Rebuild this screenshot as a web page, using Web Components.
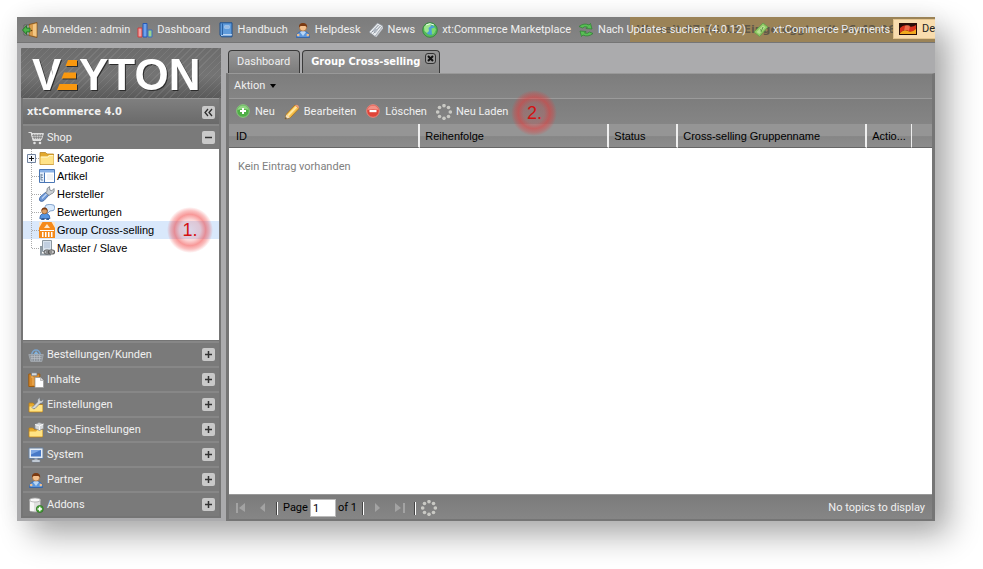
<!DOCTYPE html>
<html lang="de">
<head>
<meta charset="utf-8">
<title>xt:Commerce 4.0 - Group Cross-selling</title>
<style>
  html { background: #fff; }
  body {
    margin: 0; padding: 17px 48px 48px 17px; box-sizing: border-box; min-height: 100vh;
    --ui: Roboto, "Noto Sans", sans-serif; --bold: "DejaVu Sans Condensed", "DejaVu Sans", sans-serif;
    display: flex; font: 11px/16px var(--ui); color: #f0f0f0;
    --arial: "Liberation Sans", Arial, sans-serif; --edge: #757575; --gap: #ababad; overflow: hidden;
  }
</style>
</head>
<body>
<admin-shell>
  <top-bar slot="top">
    <top-link icon="exit">Abmelden : admin</top-link>
    <top-link icon="chart">Dashboard</top-link>
    <top-link icon="book">Handbuch</top-link>
    <top-link icon="user">Helpdesk</top-link>
    <top-link icon="news">News</top-link>
    <top-link icon="globe">xt:Commerce Marketplace</top-link>
    <top-link icon="sync">Nach Updates suchen (4.0.12)</top-link>
    <top-link icon="money">xt:Commerce Payments</top-link>
    <session-clock slot="clock">Uhrzeit 07:36:13 Eingeloggt seit 06:42:26</session-clock>
    <lang-button slot="lang">De</lang-button>
  </top-bar>
  <side-panel slot="side" heading="xt:Commerce 4.0">
    <side-section icon="cart" open label="Shop">
      <tree-item icon="folder" branch>Kategorie</tree-item>
      <tree-item icon="sheet">Artikel</tree-item>
      <tree-item icon="wrench">Hersteller</tree-item>
      <tree-item icon="review">Bewertungen</tree-item>
      <tree-item icon="cross" selected badge="1.">Group Cross-selling</tree-item>
      <tree-item icon="master" last>Master / Slave</tree-item>
    </side-section>
    <side-section icon="basket" label="Bestellungen/Kunden"></side-section>
    <side-section icon="paste" label="Inhalte"></side-section>
    <side-section icon="foldertool" label="Einstellungen"></side-section>
    <side-section icon="folderbox" label="Shop-Einstellungen"></side-section>
    <side-section icon="monitor" label="System"></side-section>
    <side-section icon="user" label="Partner"></side-section>
    <side-section icon="dbadd" label="Addons"></side-section>
  </side-panel>
  <tab-strip slot="main">
    <tab-item>Dashboard</tab-item>
    <tab-item active>Group Cross-selling</tab-item>
  </tab-strip>
  <grid-panel slot="main">
    <tool-button slot="tools" icon="add">Neu</tool-button>
    <tool-button slot="tools" icon="pencil">Bearbeiten</tool-button>
    <tool-button slot="tools" icon="remove">Löschen</tool-button>
    <tool-button slot="tools" icon="dots">Neu Laden</tool-button>
    <step-badge slot="tools">2.</step-badge>
    <data-grid></data-grid>
    <pager-bar slot="pager"></pager-bar>
  </grid-panel>
</admin-shell>
<script>
const userShape = `<path d="M1.500 15.500q0-5 4-6h5q4 1 4 6z" fill="#5d97dc" stroke="#2c5ea8" stroke-width=".8"/><path d="M5 10l3 4 3-4-3-1.500z" fill="#b9d6f6"/><circle cx="8" cy="5.500" r="3.600" fill="#f4c08c" stroke="#9b5a22" stroke-width=".6"/><path d="M4 5.500Q3.500 1 8 1t4.200 4.500L10.500 4h-5z" fill="#7a3a12"/><circle cx="3.200" cy="13" r="1.300" fill="#f4c08c"/><circle cx="12.800" cy="13" r="1.300" fill="#f4c08c"/>`;
const folderShape = `<path d="M1 2.500h5.500L8 4h6.500v10.500H1z" fill="#e3a92e" stroke="#b98524" stroke-width=".8"/><path d="M1.400 6.500h7L9.900 5h4.700v9.200H1.400z" fill="#ffe388"/><path d="M2 7.100h6.800l1.500-1.500H14" stroke="#fff7cf" fill="none"/>`;
const dotsShape = [[8,1.700],[12.500,3.500],[14.300,8],[12.500,12.500],[8,14.300],[3.500,12.500],[1.700,8],[3.500,3.500]].map(([x,y]) => `<circle cx="${x}" cy="${y}" r="1.800" fill="#c9c9c4"/>`).join("");
const ICONS = {
  exit: `<path d="M7 2.500l8-2v15l-8-2z" fill="#d89b4c" stroke="#7d4e17" stroke-width=".8"/><path d="M11 2.500l3.500-1v13l-3.500-1z" fill="#f2c581"/><path d="M7 3H2v10h5" fill="#9ba197" stroke="#555" stroke-width=".8"/><path d="M.5 8l4-4.500v2.600H8v3.800H4.500v2.600z" fill="#4db34b" stroke="#1c6d20" stroke-width=".8"/><circle cx="9.500" cy="8.500" r=".8" fill="#5b370d"/>`,
  chart: `<path d="M1 6h4v9H1z" fill="#f3a0a0" stroke="#d23a3a"/><path d="M6 1.500h4V15H6z" fill="#6ea1ec" stroke="#2659b5"/><path d="M11 8h4v7h-4z" fill="#9ad48d" stroke="#3a6ec2"/>`,
  book: `<path d="M2 .8h12v14H3.500L2 13z" fill="#5f9bdb" stroke="#1d4f8d"/><path d="M3.500 14l1-1.200H14" stroke="#e5eefb" fill="none"/><path d="M4.500 1.500V13" stroke="#2a61a3"/><path d="M6.500 3.500h5v3h-5z" fill="#cfe3fb"/><path d="M7 5h4" stroke="#3a6fae" stroke-width=".7"/>`,
  user: userShape,
  news: `<path d="M1 10L9.500 1l5.500 3-8 10.500z" fill="#e9ecef" stroke="#8b9299" stroke-width=".8"/><path d="M3.500 10.500l7-7.500M5.500 11.500l7-7.500" stroke="#858d97"/><path d="M7 6l3 1.800L7.500 11 4.800 9z" fill="#aeb6c0"/><path d="M7 14.500L15 4v2.500L8.500 15z" fill="#c6cbd2"/>`,
  globe: `<circle cx="8" cy="8" r="7.300" fill="#58b95a" stroke="#2b8434" stroke-width=".8"/><circle cx="8.500" cy="8" r="4.800" fill="#4c9fd8"/><path d="M2 5Q4 1.500 8 1.500L9 4 6.500 6 7 9l-2 2-2.500-2z" fill="#9be68b"/><path d="M9.500 6.500l3-1 1.500 2-2 4-2 1z" fill="#7ddc6d"/><path d="M4 3q4-2.500 8 0" stroke="#effff0" fill="none"/>`,
  sync: `<path d="M1 4.500Q6 .5 11 3l1.500-1.500L14 7l-6-.5 1.500-1.500Q6 4 4.500 6z" fill="#58bf55" stroke="#2c7e31" stroke-width=".7"/><path d="M15 11.500q-5 4-10 1.500l-1.500 1.500L2 9l6 .5L6.500 11q3.500 1 5-1z" fill="#58bf55" stroke="#2c7e31" stroke-width=".7"/>`,
  money: `<path d="M1 10L10 1l5 4-8.500 9.500z" fill="#8fca62" stroke="#62984a" stroke-width=".8"/><path d="M3.500 10L10 3.300 12.500 5.300 6.300 12z" fill="#b6df92"/><path d="M7 7.500l2 1.500M8 10l2-5" stroke="#5c9a44"/>`,
  cart: `<path d="M.5 2.500h2.700l2 8H13" fill="none" stroke="#dedede" stroke-width="1.200"/><path d="M3.500 3.500h12l-2 6H5z" fill="#d0d0d0" stroke="#e8e8e8" stroke-width=".8"/><path d="M5.500 4l1 5M8 4l.5 5M11 4l-.5 5M13.500 4l-1 5M4 5.600h10.500M4.500 7.600H14" stroke="#727272" stroke-width=".6"/><circle cx="6.500" cy="13" r="1.300" fill="#e0e0e0"/><circle cx="12" cy="13" r="1.300" fill="#e0e0e0"/>`,
  folder: folderShape,
  sheet: `<path d="M.5 1.500h15v13H.5z" fill="#fff" stroke="#4a77b5"/><path d="M1 2h14v2.500H1z" fill="#89b1e6"/><path d="M5.500 4.500v10" stroke="#4a77b5"/><path d="M1 5h4v9H1z" fill="#e3eefb"/><path d="M2 6v6M2 7h2M2 9.500h2M2 12h2" stroke="#5d7590" stroke-width=".8"/><path d="M8 7h6M8 9h6M8 11h6" stroke="#e3e8ef"/>`,
  wrench: `<path d="M1 15q-1.500-2 .5-4.500L7 6l3 3-5 5.500Q3 16 1 15z" fill="#6e98d6" stroke="#3a62a0" stroke-width=".8"/><path d="M3 12.500L7.500 8" stroke="#bdd5f5" stroke-width="1.300"/><path d="M6.500 6.500L8 5.500Q7 2 10.500.5L10.800 4l2 .8L15 2.500q1 4.500-3 5.500l-2 1.500z" fill="#cbd0d5" stroke="#737b84" stroke-width=".8"/>`,
  review: `<path d="M7 1q4-1.500 8 .2 2 3.500-.5 5.300L11 7 8.500 9.500V6.500Q4.500 4.500 7 1z" fill="#d9eafd" stroke="#6b8fbf" stroke-width=".8"/><path d="M.8 14.500q0-4 3-5h4q3.200 1 3.200 5z" fill="#5796e2" stroke="#2b5ca5" stroke-width=".8"/><circle cx="5.500" cy="7" r="2.900" fill="#dba067" stroke="#864a19" stroke-width=".6"/><path d="M2.500 7Q2.500 3.500 5.500 3.500T8.500 7L7 5.600H4z" fill="#7f3c12"/><path d="M3.500 14h2v2h-4zM8 14h2v2H7z" fill="#365d94"/>`,
  cross: `<path d="M0 0h16v16H0z" fill="#f58a1a"/><path d="M0 0h3.500L0 6zM16 0h-3.500L16 6zM5 6l3-4 3 4z" fill="#fde6c8"/><path d="M1 8h14v1H1zM3 10h1.500v5H3zM6 10h1.500v5H6zM9 10h1.500v5H9zM12 10h1.500v5H12z" fill="#fff"/>`,
  master: `<path d="M3.500.5h9v11h-9z" fill="#d9e3ed" stroke="#8b969f"/><path d="M5 3h6M5 5h6M5 7h6" stroke="#a9bad2"/><path d="M2 6v8.500H12" fill="none" stroke="#8f9aa3" stroke-width="2"/><rect x="5" y="10" width="6" height="4" rx="2" fill="#b9bcc0" stroke="#5d5d5d"/><rect x="9.500" y="10" width="6" height="4" rx="2" fill="#ccc" stroke="#5d5d5d" stroke-width="1.200"/><path d="M7 12h6" stroke="#555"/>`,
  basket: `<path d="M3.500 8q1-5 4.500-5t4.500 5" fill="none" stroke="#79a4cf" stroke-width="1.500"/><path d="M5 8L8 4l3.500 4" fill="#84b5df"/><path d="M.8 7.500h14.500l-1.500 7h-11z" fill="#8d949c" stroke="#a6acb3" stroke-width=".8"/><path d="M2.500 9.500h11M3 11.500h10.500M4 8v6M6.500 8v6M9 8v6M11.500 8v6" stroke="#c0c5cb" stroke-width=".6"/>`,
  paste: `<path d="M.8 2h11v12.500h-11z" fill="#d98b2b" stroke="#9b5b12"/><path d="M3.500.8H9v3H3.500z" fill="#d8dce0" stroke="#737a82" stroke-width=".8"/><path d="M3 5h2v8" fill="none" stroke="#efb564"/><path d="M7 5.500h5.500l3 3v7H7z" fill="#fff" stroke="#9b9b9b" stroke-width=".8"/><path d="M12.500 5.500v3h3" fill="#dcdcdc" stroke="#999" stroke-width=".6"/>`,
  foldertool: `<path d="M1 6h4l1.500 1.500h8V15H1z" fill="#e5a92c" stroke="#b67d1c" stroke-width=".8"/><path d="M1.500 9.500H8l1.500-1.500h5v6.500h-13z" fill="#ffe384"/><path d="M4 10.500L9.500 5q-.5-3.500 2.500-4.500v3l1.500.5L15.500 2q.5 4-3.500 4.500L7 11.500q-2 1-3-1z" fill="#d4d8dc" stroke="#70767d" stroke-width=".7"/>`,
  folderbox: `<path d="M1 6h4l1.500 1.500h8V15H1z" fill="#e5a92c" stroke="#b67d1c" stroke-width=".8"/><path d="M1.500 9.500H8l1.500-1.500h5v6.500h-13z" fill="#ffe384"/><path d="M7 2.500L11 .5l4.500 1.500v4.500l-4 2L7 6.500z" fill="#d5d8db" stroke="#898e94" stroke-width=".7"/><path d="M7 2.500l4.500 1.500 4-2M11.500 4v4" fill="none" stroke="#f7f7f7"/>`,
  monitor: `<path d="M1 1h14v10.500H1z" fill="#e5edf6" stroke="#68809e"/><path d="M3 3h10v6.500H3z" fill="#4779c7"/><path d="M3 3h10L3 7.500z" fill="#7ca6e3"/><path d="M6.500 11.500h3V13h-3z" fill="#b4bfcc"/><path d="M4 13h8v2H4z" fill="#dfe5ec" stroke="#78889c" stroke-width=".6"/>`,
  dbadd: `<path d="M1.500 3v10q0 2 5.500 2t5.500-2V3z" fill="#dfdfdf" stroke="#9d9d9d" stroke-width=".8"/><path d="M3 4v10M5 5v9" stroke="#fff" stroke-width="1.500"/><ellipse cx="7" cy="3" rx="5.500" ry="2" fill="#f8f8f8" stroke="#a8a8a8" stroke-width=".8"/><circle cx="11.800" cy="12" r="3.500" fill="#4fa83e" stroke="#2b711f" stroke-width=".8"/><path d="M11.800 9.800v4.400M9.600 12H14" stroke="#fff" stroke-width="1.500"/>`,
  add: `<circle cx="8" cy="7" r="6.300" fill="#4fae46" stroke="#8ccb80" stroke-width="1"/><path d="M2.500 6Q3.500 1.500 8 1.500T13.500 6Q8 4 2.500 6z" fill="#93d486"/><path d="M8 4v6M5 7h6" stroke="#fff" stroke-width="2"/>`,
  remove: `<circle cx="8" cy="7" r="6.300" fill="#e04438" stroke="#e98a80" stroke-width="1"/><path d="M2.500 6Q3.500 1.500 8 1.500T13.500 6Q8 4 2.500 6z" fill="#f29287"/><path d="M4.500 7h7" stroke="#fff" stroke-width="2.400"/>`,
  pencil: `<path d="M1 15l1.500-5L11 1l4 3.500L6.500 13.500z" fill="#f7bf48" stroke="#a8701d" stroke-width=".8"/><path d="M4 11.500L12.500 2.800" stroke="#ffe7a0" stroke-width="2"/><path d="M11 1.500q1.500-1.500 3.200 0t.3 3z" fill="#ec9a72"/><path d="M1 15l1.500-4.500L6 13.500z" fill="#f6dfb8"/><path d="M1 15l.6-2 1.500 1.300z" fill="#333"/>`,
  dots: dotsShape
};
const define = (name, css, html) => customElements.define(name, class extends HTMLElement {
  constructor() {
    super();
    this.attachShadow({ mode: "open" });
  }
  connectedCallback() {
    if (this.shadowRoot.childNodes.length) return;
    const t = document.createElement("template");
    t.innerHTML = `<style>*{box-sizing:border-box}button,input{font:inherit;color:inherit;margin:0;padding:0;border:0;background:none}a{color:inherit;text-decoration:none}:host{display:block;box-sizing:border-box}${css}</style>` +
      (typeof html === "function" ? html(this) : html);
    this.shadowRoot.append(t.content.cloneNode(true));
  }
});
const attr = (el, n) => el.getAttribute(n) || "";

define("ui-icon", `:host{width:16px;height:16px;flex:none}svg{display:block}`,
  el => `<svg width="16" height="16" viewBox="0 0 16 16" aria-hidden="true">${ICONS[attr(el, "name")]}</svg>`);

define("admin-shell", `
  :host{flex:1;min-width:0;display:grid;grid-template:26px 1fr / 200px minmax(0,1fr);column-gap:5px;
    background:var(--gap);box-shadow:14px 14px 30px rgba(0,0,0,.33),0 0 24px rgba(0,0,0,.06);min-height:500px}
  .top{grid-column:1/3;min-width:0}
  .side{padding:5px 0 3px 4px;display:flex;width:204px}
  .main{padding-top:7px;display:flex;flex-direction:column;min-width:0;margin-left:4px}`,
  `<header class="top"><slot name="top"></slot></header><aside class="side"><slot name="side"></slot></aside><main class="main"><slot name="main"></slot></main>`);

define("top-bar", `
  :host{height:26px;position:relative;overflow:hidden;background:linear-gradient(#7c7c7c,#858585);border-bottom:1px solid var(--edge)}
  nav{position:relative;display:flex;align-items:center;gap:7px;height:25px;padding-left:5px}
  .clock{position:absolute;top:0;right:0;bottom:0}
  .lang{position:absolute;top:2px;right:0}`,
  `<div class="clock"><slot name="clock"></slot></div><nav><slot></slot></nav><div class="lang"><slot name="lang"></slot></div>`);

define("top-link", `:host{flex:none}a{display:flex;align-items:center;gap:4px;white-space:nowrap}`,
  el => `<a href="#"><ui-icon name="${attr(el, "icon")}"></ui-icon><slot></slot></a>`);

define("session-clock", `:host{width:305px;height:25px;background:#9b8357;color:#5f5849;font:bold 11px/25px "DejaVu Sans",sans-serif;padding-left:6px;white-space:nowrap}`, `<slot></slot>`);

define("lang-button", `
  button{display:flex;align-items:center;gap:5px;height:20px;padding-left:5px;background:#f8dcae;border:1px solid #e3c48e;border-right:0;color:#222}
  svg{flex:none}`,
  `<button type="button"><svg width="18" height="12" viewBox="0 0 18 12" aria-hidden="true"><path d="M0 0h18v12H0z" fill="#2a0d08"/><path d="M1 5q4-4 8-2t8-1v6q-4 2-8 0t-8 2z" fill="#d8301a"/><path d="M1 10q4-4 8-2t8-2v5H1z" fill="#f2a91e"/><path d="M6 3q3-2 5 0l-1 5q-2-2-5 0z" fill="#ff9068" opacity=".6"/></svg><slot></slot></button>`);

define("veyton-logo", `:host{height:50px;background:repeating-linear-gradient(135deg,rgba(255,255,255,.08) 0 1px,transparent 1px 5px),linear-gradient(#6c6c6c,#747474 55%,#5a5a5a)}
  svg{display:block;width:100%;height:50px}text{font:bold 44px "Liberation Sans",Arial,sans-serif;fill:#fff}`,
  `<svg viewBox="0 0 200 50" role="img" aria-label="VEYTON">
   <defs><clipPath id="v"><path d="M8 8h19l9 36H8zM29 8h14v14l-10 13z"/></clipPath></defs>
   <g style="filter:drop-shadow(1px 1px 0 #2c2c2c)"><g clip-path="url(#v)"><text x="11" y="42">V</text></g><text x="58" y="42">YTON</text>
   <path fill="#f9980f" d="M47 12h9v6H44.500zM43 24.500h12v6H40.500zM38.500 36H56v6H36z"/></g></svg>`);

define("side-panel", `
  :host{flex:1;display:flex;flex-direction:column;min-width:0}
  .box{flex:1;display:flex;flex-direction:column;border:2px solid var(--edge);border-top:0}
  h1{margin:0;height:26px;font:bold 11px/16px var(--bold);display:flex;align-items:center;justify-content:space-between;padding:1px 4px 0 4px;background:linear-gradient(#7f7f7f,#6a6a6a);border-top:1px solid #979797}
  button{width:13px;height:13px;border-radius:2px;background:#c9c9c9;display:flex;align-items:center;justify-content:center}`,
  el => `<veyton-logo></veyton-logo><div class="box"><h1>${attr(el, "heading")}<button type="button" aria-label="Einklappen"><svg width="9" height="9" viewBox="0 0 9 9"><path d="M4 1L1 4.500 4 8M8 1L5 4.500 8 8" fill="none" stroke="#2e2e2e" stroke-width="1.300"/></svg></button></h1><slot></slot></div>`);

define("side-section", `
  :host([open]){flex:1;display:flex;flex-direction:column}
  .head{display:flex;align-items:center;width:100%;height:25px;padding:0 4px 0 5px;gap:3px;background:#7a7a7a;border-top:2px solid #878787;text-align:left}
  .head span{flex:1}
  .mark{width:13px;height:13px;border-radius:2px;background:#c9c9c9}
  .mark svg{display:block}
  .body{flex:1;background:#fff;border-bottom:1px solid var(--edge)}`,
  el => `<button class="head" type="button" aria-expanded="${el.hasAttribute("open")}"><ui-icon name="${attr(el, "icon")}"></ui-icon><span>${attr(el, "label")}</span><i class="mark"><svg width="13" height="13" viewBox="0 0 13 13"><path d="${el.hasAttribute("open") ? "M3 6.500h7" : "M3 6.500h7M6.500 3v7"}" stroke="#333" stroke-width="1.500"/></svg></i></button>${el.hasAttribute("open") ? `<div class="body" role="tree"><slot></slot></div>` : ""}`);

define("tree-item", `
  :host{position:relative}
  a{display:flex;align-items:center;height:18px;color:#000;font:11px/18px var(--arial);padding-left:3px;white-space:nowrap}
  :host([selected]) a{background:#d9e8fb}
  .line{flex:none;margin-right:-3px}
  ui-icon{margin-right:2px}
  step-badge{position:absolute;right:6px;top:50%;margin-top:-23px;z-index:1}`,
  el => `<a href="#" role="treeitem"><svg class="line" width="16" height="18" viewBox="0 0 16 18"><path d="M5.500 0v${el.hasAttribute("last") ? 9 : 18}M6 9.500h9" stroke="#aaa" stroke-dasharray="1 1"/>${el.hasAttribute("branch") ? `<path d="M1.500 5.500h8v8h-8z" fill="#f3f6fb" stroke="#71839f"/><path d="M3 9.500h5M5.500 7v5" stroke="#111"/>` : ""}</svg><ui-icon name="${attr(el, "icon")}"></ui-icon><slot></slot></a>${attr(el, "badge") ? `<step-badge>${attr(el, "badge")}</step-badge>` : ""}`);

define("step-badge", `:host{width:46px;height:46px;border-radius:50%;display:flex;align-items:center;justify-content:center;flex:none;
  background:radial-gradient(circle closest-side,rgba(240,60,60,.1) 0,rgba(240,60,60,.2) 45%,rgba(240,50,50,.5) 68%,rgba(240,50,50,.3) 84%,transparent);color:#d41212;font:18px/20px var(--arial)}`, `<slot></slot>`);

define("tab-strip", `:host{display:flex;gap:2px;padding-left:2px;height:23px}`, `<slot></slot>`);
define("tab-item", `
  :host{display:flex;align-items:flex-start;height:23px;border:1px solid #3a3a3a;border-bottom:0;border-radius:4px 4px 0 0;padding:0 9px 0 8px;background:linear-gradient(#969696,#7c7c7c)}
  :host([active]){font-weight:bold;font-family:var(--bold);padding-right:3px;background:linear-gradient(#959595,#868686);color:#fff}
  button.t{height:22px}
  .x{width:11px;height:11px;margin:2px 0 0 5px;border:1px solid #333;border-radius:3px;background:#999}
  .x svg{display:block}`,
  el => `<button class="t" type="button" role="tab"><slot></slot></button>${el.hasAttribute("active") ? `<button class="x" type="button" aria-label="Schließen"><svg width="9" height="9" viewBox="0 0 9 9"><path d="M2 2l5 5M7 2L2 7" stroke="#111" stroke-width="2"/></svg></button>` : ""}`);

define("grid-panel", `
  :host{flex:1;display:flex;flex-direction:column;border:3px solid var(--edge);border-top:1px solid #999;border-bottom-width:2px;background:#fff}
  .bar{display:flex;align-items:center;background:linear-gradient(#7d7d7d,#858585)}
  .menu{height:24px;padding-left:5px}
  .menu button{display:flex;align-items:center;gap:5px}
  .tools{height:26px;gap:9px;padding-left:6px;border-top:1px solid #9b9b9b}
  .tools ::slotted(step-badge){margin:3px 0 0 -6px;position:relative}
  .body{flex:1}`,
  `<div class="bar menu"><button type="button">Aktion<svg width="6" height="4" viewBox="0 0 6 4"><path d="M0 0h6L3 4z"/></svg></button></div>
   <div class="bar tools"><slot name="tools"></slot></div><div class="body"><slot></slot></div><slot name="pager"></slot>`);
define("tool-button", `button{display:flex;align-items:center;gap:4px;white-space:nowrap}`,
  el => `<button type="button"><ui-icon name="${attr(el, "icon")}"></ui-icon><slot></slot></button>`);

define("data-grid", `
  table{width:100%;table-layout:fixed;border-collapse:separate;border-spacing:0;font:11px/16px var(--arial);color:#000}
  th{height:24px;font-weight:normal;text-align:left;padding:0 5px;background:linear-gradient(#959595 50%,#868686 55%,#8c8c8c);border-bottom:1px solid #666;border-right:2px solid #eee;white-space:nowrap}
  th:first-child{padding-left:7px}
  th:nth-child(5){border-right-width:1px;padding-right:0}
  th:last-child{border-right:0}
  td{padding:11px 9px;color:#808080;font:11px/16px var(--ui)}
  .c1{width:27.2%}.c2,.c4{width:26.9%}.c3{width:9.8%}.c5{width:6.3%}`,
  `<table><colgroup><col class="c1"><col class="c2"><col class="c3"><col class="c4"><col class="c5"><col></colgroup>
   <thead><tr><th>ID</th><th>Reihenfolge</th><th>Status</th><th>Cross-selling Gruppenname</th><th>Actio...</th><th></th></tr></thead>
   <tbody><tr><td colspan="6">Kein Eintrag vorhanden</td></tr></tbody></table>`);

define("pager-bar", `
  :host{display:flex;align-items:center;height:25px;padding:2px 7px 0 6px;background:linear-gradient(#7b7b7b,#868686);border-top:1px solid #999}
  button,button svg{display:block}
  .n{margin-left:10px}
  i{width:2px;height:13px;background:#fff;border-left:1px solid #444}
  .s1{margin-left:7px}.s2{margin:0 8px 0 5px}.s3{margin:0 5px 0 8px}
  label{display:flex;align-items:center;gap:2px;color:#000;margin:0 2px 0 5px}
  input{width:26px;height:18px;background:#fff;border:1px solid #bbb;padding-left:2px;color:#000}
  span{color:#000}
  output{margin-left:auto}`,
  (() => {
    const b = (label, cls, d) => `<button type="button" class="${cls}" aria-label="${label}"><svg width="12" height="12" viewBox="0 0 12 12"><path d="${d}" fill="#a3a3a3"/></svg></button>`;
    return b("Erste Seite", "", "M1 1h2v10H1zM10 1v9L4 6z") + b("Vorherige Seite", "n", "M8 1v9L3 6z") +
      `<i class="s1"></i><label>Page <input type="text" value="1" size="2"></label><span>of 1</span><i class="s2"></i>` +
      b("Nächste Seite", "", "M3 1v9l5-4z") + b("Letzte Seite", "n", "M1 1v9l6-4zM9 1h2v10H9z") +
      `<i class="s3"></i><button type="button" aria-label="Neu laden"><ui-icon name="dots"></ui-icon></button><output>No topics to display</output>`;
  })());
</script>
</body>
</html>
